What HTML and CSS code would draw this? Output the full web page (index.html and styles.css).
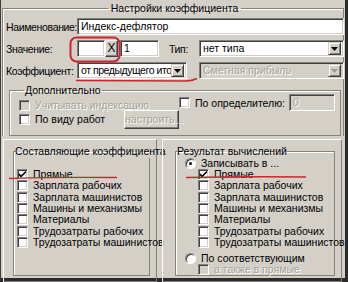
FILE: index.html
```html
<!DOCTYPE html>
<html>
<head>
<meta charset="utf-8">
<link rel="stylesheet" href="styles.css">
</head>
<body>
<div class="window">
  <fieldset class="main">
    <legend class="main-legend">Настройки коэффициента</legend>
    <div class="row">
      <span class="lbl">Наименование:</span>
      <div class="field name">Индекс-дефлятор</div>
    </div>
    <div class="row">
      <span class="lbl">Значение:</span>
      <div class="field val"></div>
      <div class="btn xbtn">X</div>
      <div class="field num">1</div>
      <span class="lbl type-lbl">Тип:</span>
      <div class="field combo type"><span class="ctext">нет типа</span><span class="arrow"><svg width="7" height="4" viewBox="0 0 7 4"><path d="M0 0h7L3.5 4z" fill="#000"/></svg></span></div>
    </div>
    <div class="row">
      <span class="lbl">Коэффициент:</span>
      <div class="field combo coef"><span class="ctext">от предыдущего итог</span><span class="arrow"><svg width="7" height="4" viewBox="0 0 7 4"><path d="M0 0h7L3.5 4z" fill="#000"/></svg></span></div>
      <div class="field combo prof disabled"><span class="ctext">Сметная прибыль</span><span class="arrow"><svg width="7" height="4" viewBox="0 0 7 4"><path d="M0 0h7L3.5 4z" fill="#a09c94"/></svg></span></div>
    </div>
    <fieldset class="group extra">
      <legend>Дополнительно</legend>
      <div class="extra-grid">
        <div class="extra-left">
          <div class="chk-row disabled first"><span class="cb"></span><span>Учитывать индексацию</span></div>
          <div class="chk-row work"><span class="cb"></span><span class="work-lbl">По виду работ</span><div class="btn setup">настроить...</div></div>
        </div>
        <div class="extra-right">
          <span class="cb"></span><span class="det-lbl">По определителю:</span><div class="field det disabled">0</div>
        </div>
      </div>
    </fieldset>
  </fieldset>
  <div class="panels">
    <div class="panel">
      <fieldset class="group comp">
        <legend>Составляющие коэффициента</legend>
        <div class="list">
          <div class="chk-row"><span class="cb checked"><svg width="9" height="9" viewBox="0 0 9 9"><path d="M1 4l2 2.5L8 1.5" fill="none" stroke="#000" stroke-width="1.6"/></svg></span><span>Прямые</span></div>
          <div class="chk-row"><span class="cb"></span><span>Зарплата рабочих</span></div>
          <div class="chk-row"><span class="cb"></span><span>Зарплата машинистов</span></div>
          <div class="chk-row"><span class="cb"></span><span>Машины и механизмы</span></div>
          <div class="chk-row"><span class="cb"></span><span>Материалы</span></div>
          <div class="chk-row"><span class="cb"></span><span>Трудозатраты рабочих</span></div>
          <div class="chk-row"><span class="cb"></span><span>Трудозатраты машинистов</span></div>
        </div>
      </fieldset>
    </div>
    <div class="panel">
      <fieldset class="group result">
        <legend>Результат вычислений</legend>
        <div class="radio-row"><span class="rb on"></span><span>Записывать в ...</span></div>
        <div class="list sub">
          <div class="chk-row"><span class="cb checked"><svg width="9" height="9" viewBox="0 0 9 9"><path d="M1 4l2 2.5L8 1.5" fill="none" stroke="#000" stroke-width="1.6"/></svg></span><span>Прямые</span></div>
          <div class="chk-row"><span class="cb"></span><span>Зарплата рабочих</span></div>
          <div class="chk-row"><span class="cb"></span><span>Зарплата машинистов</span></div>
          <div class="chk-row"><span class="cb"></span><span>Машины и механизмы</span></div>
          <div class="chk-row"><span class="cb"></span><span>Материалы</span></div>
          <div class="chk-row"><span class="cb"></span><span>Трудозатраты рабочих</span></div>
          <div class="chk-row"><span class="cb"></span><span>Трудозатраты машинистов</span></div>
        </div>
        <div class="radio-row corr"><span class="rb"></span><span>По соответствующим</span></div>
        <div class="chk-row disabled also"><span class="cb"></span><span>а также в прямые</span></div>
      </fieldset>
    </div>
  </div>
  <svg class="marks" width="348" height="282" viewBox="0 0 348 282">
    <rect x="70.5" y="37.5" width="49" height="24" rx="6" fill="none" stroke="#c8282d" stroke-width="2"/>
    <path d="M76 80.5 L186 81 Q192 81 197 78.5" fill="none" stroke="#c8282d" stroke-width="1.5"/>
    <path d="M9 178.5 Q40 177 117 177.5" fill="none" stroke="#c8282d" stroke-width="1.5"/>
    <path d="M186 177.5 Q240 176.5 306 177" fill="none" stroke="#c8282d" stroke-width="1.5"/>
  </svg>
</div>
</body>
</html>
```
FILE: styles.css
```css
html, body {
  margin: 0;
  padding: 0;
}
body {
  width: 348px;
  height: 282px;
  overflow: hidden;
  background: #d4d0c8;
  font-family: "Liberation Sans", Arial, sans-serif;
  font-size: 10.5px;
  color: #000;
  white-space: nowrap;
}
.window {
  position: relative;
  width: 348px;
  height: 282px;
  box-sizing: border-box;
  border-left: 1px solid #3c3c3c;
  border-right: 3px solid #2a2a2a;
  border-bottom: 4px solid #2a2a2a;
  background: #d4d0c8;
  display: flex;
  flex-direction: column;
}
fieldset {
  margin: 0;
  padding: 0;
  min-width: 0;
  border: 1px solid #858279;
  box-shadow: 1px 1px 0 #fff inset;
}
legend {
  padding: 0 2px;
  line-height: 13px;
}
.main {
  margin: 2px 1px 0 1px;
  padding: 3px 0 0 3px;
  border-bottom: none;
  height: 138px;
  box-sizing: border-box;
}
.main-legend {
  margin: 0 auto;
  padding: 0 3px;
}
.row {
  display: flex;
  align-items: center;
  height: 17px;
  margin-bottom: 5px;
}
.lbl {
  width: 71px;
  flex: none;
  letter-spacing: -0.35px;
}
.field {
  box-sizing: border-box;
  height: 17px;
  flex: none;
  background: #fff;
  border: 1px solid;
  border-color: #808080 #fff #fff #808080;
  box-shadow: inset 1px 1px #404040, inset -1px -1px #d4d0c8;
  padding: 0 3px;
  line-height: 15px;
  overflow: hidden;
}
.name { width: 267px; }
.val { width: 28px; }
.num { width: 39px; margin-left: 2px; }
.btn {
  box-sizing: border-box;
  flex: none;
  background: #d4d0c8;
  border: 1px solid;
  border-color: #fff #404040 #404040 #fff;
  box-shadow: inset -1px -1px #808080;
  text-align: center;
}
.xbtn {
  width: 13px;
  height: 17px;
  line-height: 15px;
  font-size: 12px;
}
.type-lbl {
  width: auto;
  margin-left: 10px;
}
.combo {
  display: flex;
  align-items: center;
  padding: 0 2px 0 3px;
}
.ctext {
  flex: 1;
  overflow: hidden;
}
.coef .ctext { letter-spacing: -0.45px; }
.arrow {
  box-sizing: border-box;
  width: 13px;
  height: 13px;
  flex: none;
  display: flex;
  align-items: center;
  justify-content: center;
  background: #d4d0c8;
  border: 1px solid;
  border-color: #d4d0c8 #404040 #404040 #d4d0c8;
  box-shadow: inset 1px 1px #fff, inset -1px -1px #808080;
}
.type { width: 145px; margin-left: 11px; }
.coef { width: 110px; }
.prof { width: 145px; margin-left: 12px; }
.disabled, .disabled .ctext, .setup {
  color: #a5a198;
  text-shadow: 1px 1px 0 #fff;
}
.field.disabled { background: #d4d0c8; }
.disabled .cb { background: #d4d0c8; }
.extra {
  margin: 0 2px 0 3px;
  padding: 0 0 0 9px;
  height: 52px;
  box-sizing: border-box;
}
.extra legend { margin-left: 5px; padding: 0 1px; }
.extra-grid {
  display: flex;
  justify-content: space-between;
}
.extra-left { padding-top: 2px; }
.chk-row {
  display: flex;
  align-items: center;
  height: 11px;
  gap: 5px;
  line-height: 11px;
}
.cb {
  box-sizing: border-box;
  width: 11px;
  height: 11px;
  flex: none;
  background: #fff;
  border: 1px solid;
  border-color: #808080 #fff #fff #808080;
  box-shadow: inset 1px 1px #404040, inset -1px -1px #d4d0c8;
  display: flex;
  align-items: center;
  justify-content: center;
}
.extra .chk-row.first { height: 12px; }
.work { height: 19px; margin-top: -1px; }
.work-lbl { width: 84px; }
.setup {
  width: 55px;
  height: 19px;
  line-height: 17px;
}
.extra-right {
  display: flex;
  align-items: center;
  gap: 4px;
  height: 17px;
  margin-top: -3px;
  margin-right: 5px;
}
.det-lbl { margin-left: 1px; }
.det { width: 46px; }
.panels {
  flex: 1;
  display: flex;
  gap: 5px;
  padding: 3px 1px 1px 2px;
}
.panel {
  flex: none;
  box-sizing: border-box;
  border: 1px solid;
  border-color: #fff #808080 #808080 #fff;
  padding: 5px 6px 5px 9px;
}
.panel:first-child { width: 154px; }
.panel:last-child { width: 180px; padding-left: 12px; }
.group.comp, .group.result {
  height: 100%;
  box-sizing: border-box;
}
.comp { padding: 11px 0 0 3px; }
.comp legend, .result legend { padding: 0; margin-left: -2px; }
.list .chk-row { height: 11.33px; }
.result { padding: 0 0 0 3px; }
.radio-row {
  display: flex;
  align-items: center;
  gap: 5px;
  height: 11px;
  line-height: 11px;
}
.rb {
  box-sizing: border-box;
  width: 11px;
  height: 11px;
  border-radius: 50%;
  background: #fff;
  border: 1px solid;
  border-color: #808080 #fff #fff #808080;
  box-shadow: inset 1px 1px #404040;
  position: relative;
}
.rb.on::after {
  content: "";
  position: absolute;
  left: 3px;
  top: 3px;
  width: 3px;
  height: 3px;
  border-radius: 50%;
  background: #000;
}
.result .radio-row { margin-left: 6px; }
.result .radio-row:first-child { margin-top: 1px; }
.sub { margin-left: 19px; margin-top: 0; }
.corr { margin-top: 5px; }
.also { margin-left: 19px; margin-top: 0; }
.marks {
  position: absolute;
  left: -1px;
  top: 0;
  pointer-events: none;
}
```
